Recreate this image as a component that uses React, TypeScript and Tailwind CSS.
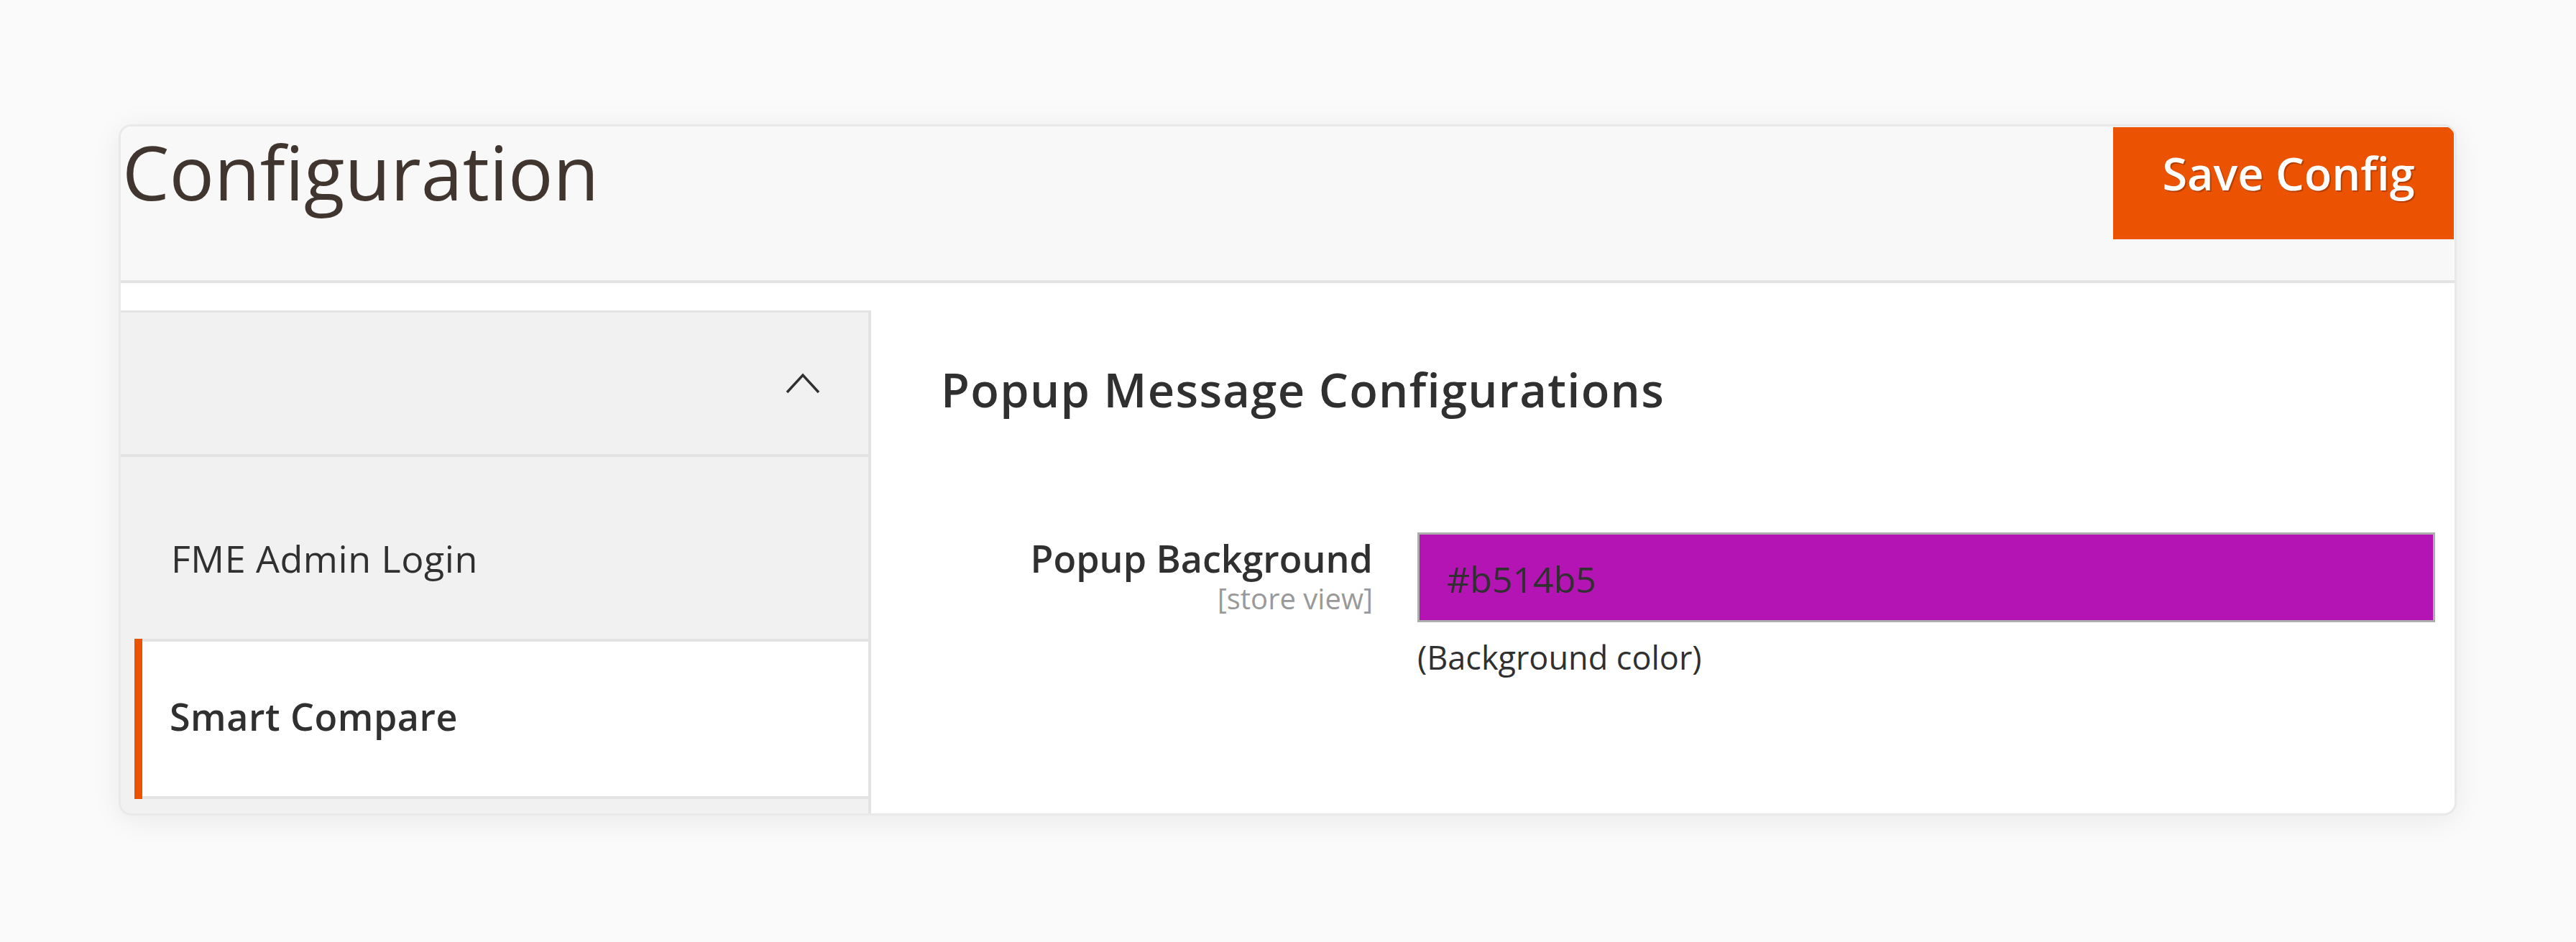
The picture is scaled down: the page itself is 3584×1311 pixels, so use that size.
import React from 'react';

const font = { fontFamily: '"Open Sans", "Noto Sans", sans-serif' };

function Chevron() {
  return (
    <svg width="50" height="30" viewBox="0 0 50 30" fill="none">
      <polyline points="3,27 25,3 47,27" stroke="#303030" strokeWidth="3.5" />
    </svg>
  );
}

export default function App() {
  return (
    <div className="w-full h-[1311px] bg-[#fafafa] pl-[165px] pt-[173px]" style={font}>
      <div className="w-[3253px] h-[962px] bg-white border-[3px] border-[#e9e9e9] rounded-[18px] overflow-hidden shadow-[0_6px_40px_rgba(0,0,0,0.07)] flex flex-col">
        {/* page header */}
        <div className="h-[218px] shrink-0 bg-[#f8f8f8] border-b-4 border-[#e3e3e3] flex justify-between items-start">
          <h1 className="mt-[1px] pl-[2px] text-[104px] leading-[1.2] font-normal text-[#41362f]">
            Configuration
          </h1>
          <button className="mt-[1px] mr-[1px] w-[474px] h-[156px] bg-[#eb5202] text-white text-[63px] leading-none font-semibold flex justify-center items-start pt-[32px] pl-[14px] [text-shadow:2px_2px_0_rgba(120,40,0,0.45)]">
            Save Config
          </button>
        </div>

        {/* body */}
        <div className="flex-1 flex pt-[38px] min-h-0">
          <aside className="w-[1044px] shrink-0 bg-[#f1f1f1] border-t-[3px] border-r-4 border-[#e3e3e3] flex flex-col">
            <div className="h-[201px] shrink-0 border-b-4 border-[#e3e3e3] flex items-center justify-end pr-[66px]">
              <Chevron />
            </div>
            <div className="h-[253px] shrink-0 pl-[70px] pt-[115px]">
              <span className="text-[52px] leading-none text-[#303030] tracking-[0.01em]">FME Admin Login</span>
            </div>
            <div className="h-[223px] shrink-0 ml-[19px] flex">
              <div className="w-[11px] bg-[#eb5202]" />
              <div className="flex-1 bg-white border-y-4 border-[#e3e3e3] pl-[38px] pt-[78px]">
                <span className="text-[52px] leading-none font-semibold text-[#303030] tracking-[0.01em]">Smart Compare</span>
              </div>
            </div>
            <div className="flex-1" />
          </aside>

          <main className="flex-1 pt-[78px]">
            <h2 className="pl-[97px] text-[65px] leading-none font-semibold text-[#303030] tracking-[0.02em]">
              Popup Message Configurations
            </h2>
            <div className="mt-[166px] flex items-start">
              <div className="w-[698px] shrink-0 text-right pt-[5px]">
                <div className="text-[52px] leading-[1.2] font-semibold text-[#303030]">Popup Background</div>
                <div className="mt-[1px] text-[40px] leading-[1.2] text-[#999999]">[store view]</div>
              </div>
              <div className="ml-[62px] w-[1416px]">
                <div className="h-[125px] bg-[#b514b5] border-[3px] border-[#adadad] flex items-center pl-[38px] pt-[4px]">
                  <span className="text-[50px] leading-none text-[#303030]">#b514b5</span>
                </div>
                <div className="mt-[26px] text-[45px] leading-none text-[#303030]">(Background color)</div>
              </div>
            </div>
          </main>
        </div>
      </div>
    </div>
  );
}
